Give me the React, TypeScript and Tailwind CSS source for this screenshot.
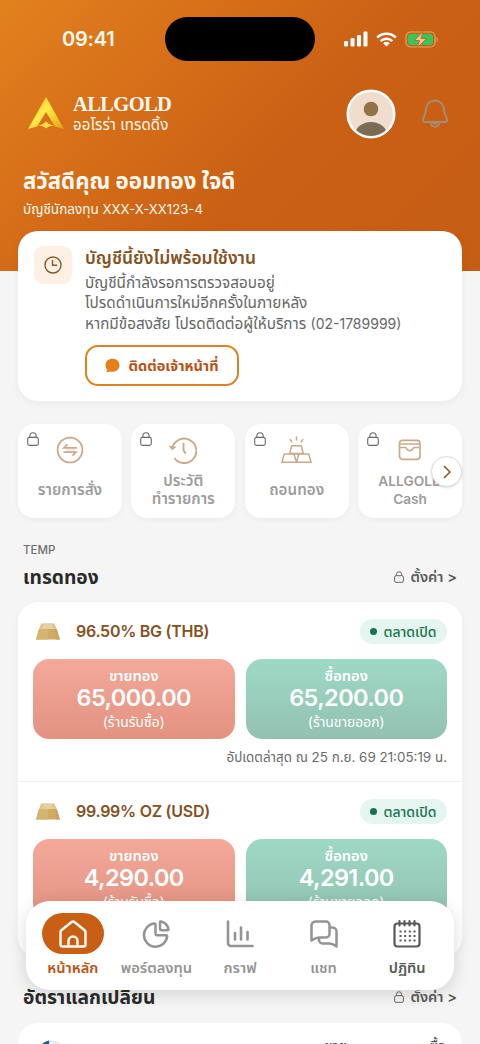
import React from 'react';

const BellIcon = () => (
  <svg width="28" height="30" viewBox="0 0 28 30" fill="none" stroke="#a58d78" strokeWidth="1.900" strokeLinejoin="round">
    <path d="M14 1.500c-5 0-8.600 3.500-8.900 8.300-.2 3.700-1 5.700-3 10.200-.7 1.700-.2 3 1.400 3h21c1.600 0 2.100-1.300 1.400-3-2-4.500-2.800-6.500-3-10.200C22.600 5 19 1.500 14 1.500z" />
    <path d="M9.300 23.500c.6 2.700 2.400 4.300 4.700 4.300s4.100-1.600 4.700-4.300M11.500 23.500c.6 1.200 1.500 1.700 2.500 1.700s1.900-.5 2.500-1.700" strokeWidth="1.600" />
  </svg>
);

const LockIcon: React.FC<{ className: string }> = ({ className }) => (
  <svg className={className} viewBox="0 0 12 14" fill="none" stroke="currentColor" strokeWidth="1.100">
    <rect x="0.700" y="5.400" width="10.600" height="8" rx="1.800" />
    <path d="M2.900 5.400V3.800a3.100 3.100 0 0 1 6.200 0v1.600" />
  </svg>
);

const LogoMark = () => (
  <svg width="36" height="34" viewBox="0 0 36 34">
    <defs>
      <linearGradient id="logo" x1="0" y1="0" x2="1" y2="1">
        <stop offset="0" stopColor="#f2b51c" />
        <stop offset="0.45" stopColor="#ffec4a" />
        <stop offset="0.7" stopColor="#f6c92c" />
        <stop offset="1" stopColor="#e39a1c" />
      </linearGradient>
    </defs>
    <path d="M18 0 36 32 27 29.500 18 15 9 29.500 0 32z" fill="url(#logo)" />
    <path d="M9.500 28.500c3.500-.2 6.500-1.700 8.500-4 2 2.300 5 3.800 8.500 4-3.500.2-6.500 1-8.500 3-2-2-5-2.800-8.500-3z" fill="#ffdb45" />
  </svg>
);

const GoldBar = () => (
  <svg width="24" height="17" viewBox="0 0 24 17">
    <path d="M5 .5h13.500l2.200 5.700H3z" fill="#dcc591" />
    <path d="M3 6h17.700L24 16.500H0z" fill="#cfac62" />
    <path d="M8 .5h8L17 6H6z" fill="#e5d0a4" />
    <path d="M3 6h9v10.500H0z" fill="#d3b570" />
    <path d="M18 6h2.700L24 16.500h-4z" fill="#c8a763" />
  </svg>
);

const OrdersIcon = () => (
  <svg width="28" height="28" viewBox="0 0 28 28" fill="none" stroke="#c9ab8b" strokeWidth="1.800">
    <circle cx="14" cy="14" r="12.400" />
    <path d="M11.500 8.300 8 11.800h13M16.500 19.700l3.500-3.500H7.500" strokeWidth="1.700" />
    <path d="M10 14h9" strokeWidth="1" opacity="0.500" />
  </svg>
);

const HistoryIcon = () => (
  <svg width="28" height="28" viewBox="0 0 28 28" fill="none" stroke="#c9ab8b" strokeWidth="1.900">
    <path d="M3.400 11.500A12.200 12.200 0 1 1 5.300 22" />
    <path d="m.6 10.200 2.400 3.400 3.600-2.300z" fill="#c9ab8b" strokeWidth="1" strokeLinejoin="round" />
    <path d="M14.500 7v6.500c0 1 .8 2.600 2.300 4" />
  </svg>
);

const BarsIcon = () => (
  <svg width="31" height="28" viewBox="0 0 31 28" fill="none" stroke="#c9ab8b" strokeWidth="1.500" strokeLinejoin="round">
    <path d="M10.800 9.800h9.400l2 7.600H8.800zM3.300 18h9.700l2.500 8.300H.9zM18 18h9.700l2.400 8.300H15.500zM13 18h5" />
    <path d="M15.500.6v4M8.800 3.300l2.500 3M22.200 3.300l-2.500 3" />
  </svg>
);

const WalletIcon = () => (
  <svg width="24" height="22" viewBox="0 0 24 22" fill="none" stroke="#c9ab8b" strokeWidth="1.700" strokeLinejoin="round">
    <rect x="1.500" y="1.300" width="20.500" height="19" rx="3" />
    <path d="M2 5h19.500M2 8.500h5.300c.8 0 1.100.7 1.500 1.500a3.500 3.500 0 0 0 5.900 0c.4-.8.700-1.500 1.500-1.500h5.300" />
  </svg>
);

const HomeIcon = () => (
  <svg width="28" height="28" viewBox="0 0 28 28" fill="none" stroke="#fff9f2" strokeWidth="2.500" strokeLinejoin="round">
    <path d="M1.500 12.200c0-.8.300-1.500.9-2L12.300 2.300a2.600 2.600 0 0 1 3.400 0l9.900 7.900c.6.500.9 1.200.9 2v12.300a2 2 0 0 1-2 2h-21a2 2 0 0 1-2-2z" />
    <path d="M9.500 26.500V21a4.500 4.500 0 0 1 9 0v5.500" />
  </svg>
);

const PieIcon = () => (
  <svg width="28" height="28" viewBox="0 0 28 28" fill="none" stroke="currentColor" strokeWidth="2.500" strokeLinejoin="round">
    <path d="M12.300 3.600a1 1 0 0 1 1.200 1v8.600a2 2 0 0 0 2 2h8.600a1 1 0 0 1 1 1.300A11.600 11.600 0 1 1 12.300 3.600z" />
    <path d="M18 2.500c0-.8.600-1.300 1.300-1A10 10 0 0 1 26.400 9c.2.700-.3 1.200-1 1.200H20a2 2 0 0 1-2-2z" />
  </svg>
);

const ChartIcon = () => (
  <svg width="28" height="28" viewBox="0 0 28 28" fill="none" stroke="currentColor" strokeWidth="2.600" strokeLinecap="round">
    <path d="M2 1.500V23a3 3 0 0 0 3 3h21.500M9 13v6.500M15 7.500v12M21.500 12v7.500" />
  </svg>
);

const ChatIcon = () => (
  <svg width="28" height="28" viewBox="0 0 28 28" fill="none" stroke="currentColor" strokeWidth="2.500" strokeLinejoin="round">
    <path d="M5.500 1.500H16A3.500 3.500 0 0 1 19.500 5v9a3.500 3.500 0 0 1-3.500 3.500H9c-3 0-5 1.500-7.500 3V5.500a4 4 0 0 1 4-4z" />
    <path d="M20 7.500h2.500a4 4 0 0 1 4 4v15c-2.500-1.500-4-3-7-3h-7A3.500 3.500 0 0 1 9 20v-2" />
  </svg>
);

const CalendarIcon = () => (
  <svg width="28" height="28" viewBox="0 0 28 28" fill="none" stroke="currentColor" strokeWidth="2.200">
    <rect x="1.500" y="3.500" width="25" height="23" rx="3" />
    <path d="M6.500 1.200v4.300M11.500 1.200v4.300M16.500 1.200v4.300M21.500 1.200v4.300" strokeLinecap="round" />
    <path d="M6.500 11.500H22.500M6.500 16H22.500M6.500 20.500H22.500" strokeWidth="2" strokeDasharray="2 2.670" />
  </svg>
);

const StatusBar = () => (
  <div className="flex h-[78px] items-center">
    <div className="w-[165px] pl-[62px] text-[20px] font-semibold tracking-[-0.2px]">09:41</div>
    <div className="h-11 w-[150px] rounded-full bg-black" />
    <div className="ml-[29px] flex items-center gap-2">
      <svg width="24" height="16" viewBox="0 0 24 16" fill="white">
        <rect x="0" y="10" width="4" height="5.500" rx="1.200" />
        <rect x="6.500" y="7" width="4" height="8.500" rx="1.200" />
        <rect x="13" y="4" width="4" height="11.500" rx="1.200" />
        <rect x="19.500" y="0.500" width="4" height="15" rx="1.200" />
      </svg>
      <svg width="21" height="15" viewBox="0 0 21 15" fill="none" stroke="white" strokeWidth="2.500">
        <path d="M1.200 5.600a13.200 13.200 0 0 1 18.600 0M4.700 9.200a8.200 8.200 0 0 1 11.600 0" />
        <path d="m10.500 14.500-3.300-3.300a4.700 4.700 0 0 1 6.600 0z" fill="white" stroke="none" />
      </svg>
      <svg width="34" height="17" viewBox="0 0 34 17">
        <rect x="1" y="1" width="29" height="15" rx="4.500" fill="none" stroke="#e8a467" strokeWidth="1.200" />
        <rect x="3" y="3" width="25" height="11" rx="2.500" fill="#34c759" />
        <path d="M31.500 6v5c1.600-.6 1.600-4.400 0-5z" fill="#e8a467" />
        <path d="M18 .3 9.500 9.500h5l-2 7.200 9-9.200H16z" fill="#f3c49d" stroke="#cf6b19" strokeWidth="1" />
      </svg>
    </div>
  </div>
);

const Header = () => (
  <header className="h-[271px] bg-[linear-gradient(135deg,#e2811e_0%,#d66f19_30%,#c96015_58%,#c65d15_100%)] text-[#fff9f0]">
    <StatusBar />
    <div className="flex h-[72px] items-center pr-[31px] pl-7">
      <LogoMark />
      <div className="ml-[9px] flex-1">
        <div className="h-[23px] font-['Liberation_Serif',serif] text-[20.500px] leading-[24px] font-bold tracking-[-0.600px]">ALLGOLD</div>
        <div className="h-[21px] text-[15px] leading-[20px] tracking-[0.100px] whitespace-nowrap">ออโรร่า เทรดดิ้ง</div>
      </div>
      <svg className="mr-[25px]" width="50" height="50" viewBox="0 0 50 50">
        <clipPath id="avatar"><circle cx="25" cy="25" r="22" /></clipPath>
        <circle cx="25" cy="25" r="23.300" fill="#f1ddcd" stroke="white" strokeWidth="2.400" />
        <circle cx="25" cy="20" r="7.300" fill="#927249" />
        <ellipse cx="25" cy="46" rx="16" ry="13" fill="#7b6a54" clipPath="url(#avatar)" />
      </svg>
      <BellIcon />
    </div>
    <div className="pl-[23px]">
      <h1 className="mt-[15px] h-8 text-[22.200px] leading-8 font-bold whitespace-nowrap">สวัสดีคุณ ออมทอง ใจดี</h1>
      <p className="h-6 text-[13.500px] leading-6 whitespace-nowrap">บัญชีนักลงทุน <span className="text-[13.200px]">XXX-X-XX123-4</span></p>
    </div>
  </header>
);

const NoticeCard = () => (
  <section className="relative mx-[18px] -mt-10 flex h-[170px] rounded-[20px] bg-white pl-4 shadow-[0_2px_8px_rgba(0,0,0,0.05)]">
    <div className="mt-[15px] flex size-[38px] items-center justify-center rounded-[9px] bg-[#fcf1e4]">
      <svg width="18" height="18" viewBox="0 0 18 18" fill="none" stroke="#8a5623" strokeWidth="1.400">
        <circle cx="9" cy="9" r="8" />
        <path d="M8.500 4v5.300h4.700" />
      </svg>
    </div>
    <div className="ml-[13px] pt-[13px] whitespace-nowrap">
      <h2 className="h-[29px] text-[17.400px] leading-[27px] font-semibold text-[#85521f]">บัญชีนี้ยังไม่พร้อมใช้งาน</h2>
      <p className="text-[15.300px] leading-[20.400px] text-[#666]">
        บัญชีนี้กำลังรอการตรวจสอบอยู่<br />
        โปรดดำเนินการใหม่อีกครั้งในภายหลัง<br />
        หากมีข้อสงสัย โปรดติดต่อผู้ให้บริการ <span className="text-[14px]">(02-1789999)</span>
      </p>
      <button className="mt-[11px] flex h-[41px] w-[154px] items-center justify-center gap-2 rounded-[13px] border-2 border-[#df811f] text-[14.500px] font-bold text-[#b75312]">
        <svg width="15" height="15" viewBox="0 0 15 15" fill="#e2811e">
          <path d="M7.500.7c4 0 7 2.700 7 6.500s-3 6.600-7 6.600c-.9 0-1.800-.1-2.600-.4L1.500 14.500l.6-3A6.300 6.300 0 0 1 .5 7.200C.5 3.400 3.500.7 7.500.7z" />
        </svg>
        ติดต่อเจ้าหน้าที่
      </button>
    </div>
  </section>
);

const menus = [
  { icon: OrdersIcon, lines: ['รายการสั่ง'], size: 'text-[15.200px]' },
  { icon: HistoryIcon, lines: ['ประวัติ', 'ทำรายการ'], size: 'text-[15.200px]' },
  { icon: BarsIcon, lines: ['ถอนทอง'], size: 'text-[15.200px]' },
  { icon: WalletIcon, lines: ['ALLGOLD', 'Cash'], size: 'text-[13.700px]' },
];

const QuickMenu = () => (
  <section className="relative mx-[18px] mt-[23px] grid grid-cols-4 gap-[9.500px]">
    {menus.map(({ icon: Icon, lines, size }) => (
      <div key={lines[0]} className="relative flex h-[94px] flex-col items-center rounded-2xl bg-white pt-3 shadow-[0_2px_6px_rgba(0,0,0,0.04)]">
        <LockIcon className="absolute top-2 left-[9px] h-[14px] w-3 text-[#6a6a6a]" />
        <div className="flex h-7 items-center"><Icon /></div>
        <div className={`flex h-[51px] flex-col justify-center text-center leading-[18px] font-semibold whitespace-nowrap text-[#9c9c9c] ${size}`}>
          {lines.map((line) => <div key={line}>{line}</div>)}
        </div>
      </div>
    ))}
    <button className="absolute top-8 right-0 flex size-[31px] items-center justify-center rounded-full border border-[#ddd] bg-white shadow-sm">
      <svg width="8" height="14" viewBox="0 0 8 14" fill="none" stroke="#85521f" strokeWidth="1.500"><path d="m1 1 6 6-6 6" /></svg>
    </button>
  </section>
);

const SectionTitle: React.FC<{ title: string }> = ({ title }) => (
  <div className="flex h-[30px] items-center justify-between pr-[23px] pl-[23px]">
    <h2 className="text-[19.200px] leading-[30px] font-bold whitespace-nowrap text-[#2a2a2a]">{title}</h2>
    <div className="flex items-center text-[14.600px] leading-[30px] font-semibold whitespace-nowrap text-[#5b5b5b]">
      <LockIcon className="mr-[6px] h-3 w-[10px]" />
      ตั้งค่า &gt;
    </div>
  </div>
);

const PriceBox: React.FC<{ label: string; price: string; note: string; color: string }> = ({ label, price, note, color }) => (
  <div className={`flex h-20 flex-1 flex-col items-center rounded-2xl pt-[7px] whitespace-nowrap text-white ${color}`}>
    <div className="h-5 text-[14.700px] leading-5 font-semibold">{label}</div>
    <div className="h-[23px] text-[23.500px] leading-[23px] font-semibold tracking-[-0.600px]">{price}</div>
    <div className="h-[26px] text-[13.900px] leading-[26px]">{note}</div>
  </div>
);

const GoldRow: React.FC<{ name: string; sell: string; buy: string }> = ({ name, sell, buy }) => (
  <div className="px-[15px] pt-[13px]">
    <div className="flex h-8 items-center pl-[3px]">
      <GoldBar />
      <div className="ml-[16px] flex-1 text-[16px] font-semibold tracking-[-0.270px] text-[#85521f]">{name}</div>
      <div className="flex h-[25px] w-[87px] items-center justify-center gap-[6px] rounded-full bg-[#e5f5ef] text-[14px] leading-[25px] font-medium whitespace-nowrap text-[#16734e]">
        <span className="size-[7px] rounded-full bg-[#16734e]" />
        ตลาดเปิด
      </div>
    </div>
    <div className="mt-3 flex gap-[11px]">
      <PriceBox label="ขายทอง" price={sell} note="(ร้านรับซื้อ)" color="bg-linear-to-b from-[#f3a99b] to-[#e39280]" />
      <PriceBox label="ซื้อทอง" price={buy} note="(ร้านขายออก)" color="bg-linear-to-b from-[#9fd8c6] to-[#92c1b1]" />
    </div>
    <div className="flex h-[42px] items-center justify-end pb-[5px] text-[13.400px] whitespace-nowrap text-[#6a6a6a]">อัปเดตล่าสุด ณ 25 ก.ย. 69 21:05:19 น.</div>
  </div>
);

const tabs = [
  { icon: HomeIcon, label: 'หน้าหลัก', color: 'text-[#b95312]' },
  { icon: PieIcon, label: 'พอร์ตลงทุน', color: 'text-[#949494]' },
  { icon: ChartIcon, label: 'กราฟ', color: 'text-[#949494]' },
  { icon: ChatIcon, label: 'แชท', color: 'text-[#949494]' },
  { icon: CalendarIcon, label: 'ปฏิทิน', color: 'text-[#595959]' },
];

const TabBar = () => (
  <nav className="absolute top-[901px] left-[26px] grid h-[89px] w-[428px] grid-cols-5 rounded-[24px] bg-white px-[5px] pt-3 shadow-[0_4px_18px_rgba(0,0,0,0.14)]">
    {tabs.map(({ icon: Icon, label, color }, i) => (
      <div key={label} className={`flex flex-col items-center ${color}`}>
        <div className={`flex h-[41px] w-[62px] items-center justify-center rounded-full ${i === 0 ? 'bg-[#c85f14]' : ''}`}><Icon /></div>
        <div className="h-7 text-[14.700px] leading-7 font-semibold whitespace-nowrap">{label}</div>
      </div>
    ))}
  </nav>
);

export default function App() {
  return (
    <div className="relative h-[1044px] w-[480px] overflow-hidden bg-[#f5f5f5] font-[Inter,'Noto_Sans_Thai','Noto_Sans',sans-serif]">
      <Header />
      <NoticeCard />
      <QuickMenu />
      <div className="mt-[23px] h-[18px] pl-[23px] text-[11.500px] leading-[18px] font-medium text-[#707070]">TEMP</div>
      <div className="mt-[3px]"><SectionTitle title="เทรดทอง" /></div>
      <section className="mx-[18px] mt-[10px] h-[355px] rounded-[20px] bg-white shadow-[0_2px_8px_rgba(0,0,0,0.04)]">
        <GoldRow name="96.50% BG (THB)" sell="65,000.00" buy="65,200.00" />
        <div className="border-t border-[#eee]">
          <GoldRow name="99.99% OZ (USD)" sell="4,290.00" buy="4,291.00" />
        </div>
      </section>
      <div className="mt-[25px]"><SectionTitle title="อัตราแลกเปลี่ยน" /></div>
      <section className="mx-[18px] mt-[11px] flex h-[120px] rounded-[20px] bg-white pt-[13px] pr-4 pl-[17px] text-[14px] leading-5 font-medium whitespace-nowrap text-[#555]">
        <svg width="32" height="32" viewBox="0 0 32 32">
          <circle cx="16" cy="20" r="15.500" fill="#e9ebef" />
          <path d="M6.500 8.500A15.500 15.500 0 0 1 14 4.600V9H6z" fill="#1b5aa5" />
        </svg>
        <span className="ml-auto">ขาย</span>
        <span className="ml-[83px]">ซื้อ</span>
      </section>
      <TabBar />
    </div>
  );
}
